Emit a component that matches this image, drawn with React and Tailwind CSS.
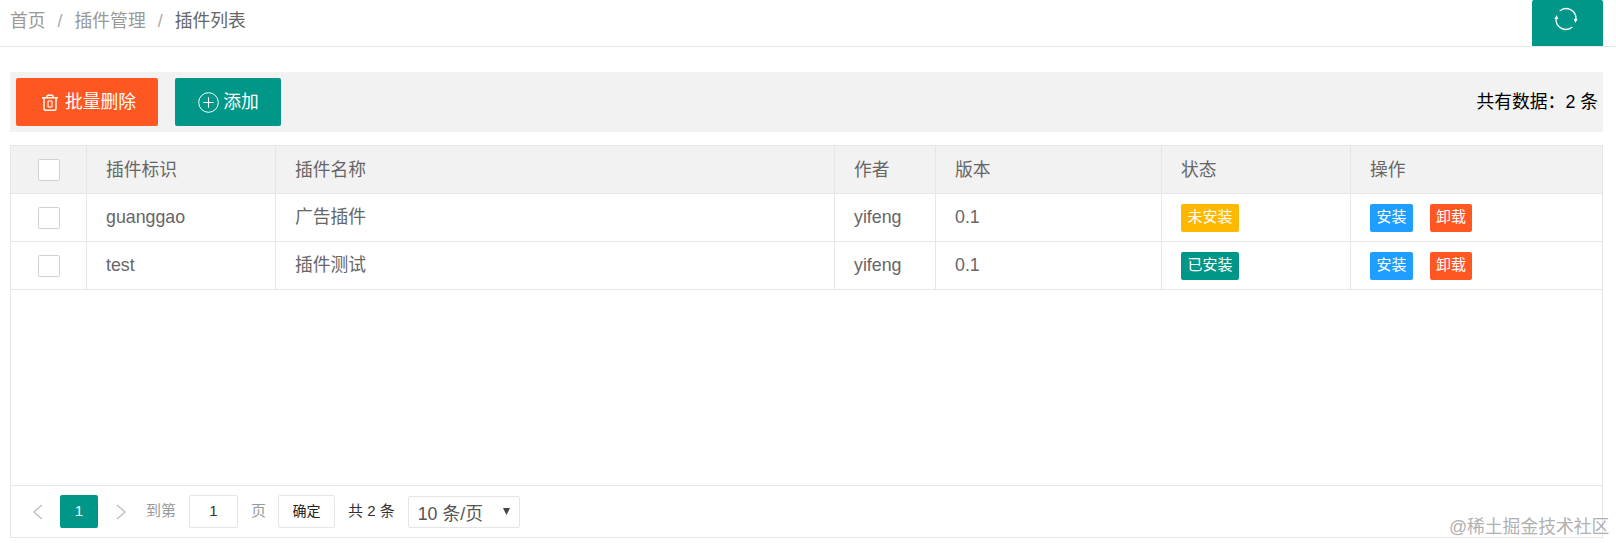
const font = { fontFamily: '"Liberation Sans", "Noto Sans CJK SC", sans-serif' };

function TrashIcon() {
  return (
    <svg width="18" height="17" viewBox="0 0 17 17" fill="none" stroke="currentColor" strokeWidth="1.400">
      <path d="M0.500 3.800h16" />
      <path d="M5.500 3.800V2.300c0-.6.400-1 1-1h4c.6 0 1 .4 1 1v1.500" />
      <path d="M2.500 3.800v11c0 .8.500 1.400 1.300 1.400h9.400c.8 0 1.300-.6 1.300-1.400v-11" />
      <path d="M6.500 7v6M10.500 7v6M6.500 7h4M6.500 13h4" strokeWidth="1.100" />
    </svg>
  );
}

function PlusCircleIcon() {
  return (
    <svg width="21" height="21" viewBox="0 0 21 21" fill="none" stroke="currentColor" strokeWidth="1">
      <circle cx="10.500" cy="10.500" r="9.800" />
      <path d="M10.500 5.200v10.600M5.200 10.500h10.600" strokeWidth="1.100" />
    </svg>
  );
}

function RefreshIcon() {
  return (
    <svg width="26" height="26" viewBox="0 0 26 26" fill="none" stroke="currentColor" strokeWidth="1.300">
      <path d="M6.700 4.900A10 10 0 0 1 23 13" />
      <path d="M19.300 21.100A10 10 0 0 1 3 13" />
      <path d="M20.800 13h3.800L22.300 17zM5.200 13H1.400L3.700 9z" fill="currentColor" stroke="none" />
    </svg>
  );
}

function Check() {
  return <span className="block w-[22px] h-[22px] bg-white border border-[#d2d2d2] rounded-[2px]" />;
}

const gridCols = 'grid grid-cols-[76px_189px_559px_101px_226px_189px_1fr]';

function Cell({ children, className = '', last = false }) {
  return (
    <div className={`flex items-center pl-[19px] ${last ? '' : 'border-r border-[#e6e6e6]'} ${className}`}>
      {children}
    </div>
  );
}

function Tag({ className, children }) {
  return (
    <span className={`inline-flex items-center justify-center h-[28px] rounded-[2px] text-white text-[15px] ${className}`}>
      {children}
    </span>
  );
}

function Row({ id, name, tag, tagClass }) {
  return (
    <div className={`${gridCols} h-[48px] border-b border-[#e6e6e6] text-[#666] text-[17.800px]`}>
      <Cell className="!pl-0 justify-center"><Check /></Cell>
      <Cell>{id}</Cell>
      <Cell>{name}</Cell>
      <Cell>yifeng</Cell>
      <Cell>0.1</Cell>
      <Cell><Tag className={`w-[58px] ${tagClass}`}>{tag}</Tag></Cell>
      <Cell last>
        <Tag className="w-[43px] bg-[#1e9fff]">安装</Tag>
        <Tag className="w-[42px] ml-[17px] bg-[#ff5722]">卸载</Tag>
      </Cell>
    </div>
  );
}

export default function App() {
  return (
    <div style={font} className="relative w-[1616px] h-[543px] overflow-hidden bg-white">
      <header className="flex items-start justify-between h-[47px] border-b border-[#e6e6e6] pl-[10px] pr-[13px]">
        <nav className="flex items-center h-[42px] text-[17.800px] text-[#999]">
          <span>首页</span>
          <span className="mx-[12px] text-[#aaa]">/</span>
          <span>插件管理</span>
          <span className="mx-[12px] text-[#aaa]">/</span>
          <span className="text-[#666]">插件列表</span>
        </nav>
        <button className="flex justify-center items-start w-[71px] h-[46px] pt-[6px] pr-[4px] bg-[#009688] text-white rounded-t-[2px]">
          <RefreshIcon />
        </button>
      </header>

      <section className="flex items-center justify-between h-[60px] mt-[25px] mx-[10px] w-[1593px] bg-[#f2f2f2] pl-[6px] pr-[5px]">
        <div className="flex items-center gap-[17px]">
          <button className="flex items-center justify-center gap-[6px] w-[142px] h-[48px] pl-[3px] pt-[1px] bg-[#ff5722] text-white text-[17.800px] rounded-[2px]">
            <TrashIcon />
            批量删除
          </button>
          <button className="flex items-center justify-center gap-[4px] w-[106px] h-[48px] pl-[1px] pt-[1px] bg-[#009688] text-white text-[17.800px] rounded-[2px]">
            <PlusCircleIcon />
            添加
          </button>
        </div>
        <span className="text-[17.800px] text-black">共有数据：2 条</span>
      </section>

      <main className="flex flex-col mt-[13px] ml-[10px] w-[1593px] h-[393px] border border-[#e6e6e6]">
        <div className={`${gridCols} h-[48px] bg-[#f2f2f2] border-b border-[#e6e6e6] text-[#666] text-[17.800px]`}>
          <Cell className="!pl-0 justify-center"><Check /></Cell>
          <Cell className="pt-[1px]">插件标识</Cell>
          <Cell className="pt-[1px]">插件名称</Cell>
          <Cell className="pt-[1px]">作者</Cell>
          <Cell className="pt-[1px]">版本</Cell>
          <Cell className="pt-[1px]">状态</Cell>
          <Cell className="pt-[1px]" last>操作</Cell>
        </div>
        <Row id="guanggao" name="广告插件" tag="未安装" tagClass="bg-[#ffb800]" />
        <Row id="test" name="插件测试" tag="已安装" tagClass="bg-[#009688]" />

        <div className="flex-1" />

        <footer className="flex items-center h-[52px] border-t border-[#e6e6e6] text-[15px]">
          <svg className="ml-[20px]" width="14" height="18" viewBox="0 0 14 18" fill="none" stroke="#c2c2c2" strokeWidth="1.500">
            <path d="M11 2L3 9l8 7" />
          </svg>
          <span className="flex items-center justify-center w-[38px] h-[33px] ml-[15px] bg-[#009688] text-white rounded-[2px]">1</span>
          <svg className="ml-[16px]" width="14" height="18" viewBox="0 0 14 18" fill="none" stroke="#c2c2c2" strokeWidth="1.500">
            <path d="M3 2l8 7-8 7" />
          </svg>
          <span className="ml-[18px] text-[#999] text-[15px]">到第</span>
          <span className="flex items-center justify-center w-[49px] h-[33px] ml-[13px] border border-[#e6e6e6] rounded-[2px] text-[#333]">1</span>
          <span className="ml-[13px] text-[#999] text-[15px]">页</span>
          <button className="flex items-center justify-center w-[57px] h-[33px] ml-[12px] bg-white border border-[#e6e6e6] rounded-[2px] text-[14px] text-[#222]">确定</button>
          <span className="ml-[13px] text-[#333] text-[15px]">共 2 条</span>
          <span className="relative flex items-center w-[112px] h-[32px] ml-[13px] pl-[9px] pt-[5px] border border-[#e6e6e6] rounded-[2px] text-[17.800px] text-[#555]">
            10 条/页
            <svg className="absolute right-[9px] top-[11px]" width="7" height="7" viewBox="0 0 7 7">
              <path d="M0 0h7L3.500 7z" fill="#444" />
            </svg>
          </span>
        </footer>
      </main>

      <span className="absolute left-[1449px] top-[515px] text-[17.800px] leading-[24px] text-[#b0b0b0] whitespace-nowrap">@稀土掘金技术社区</span>
    </div>
  );
}
